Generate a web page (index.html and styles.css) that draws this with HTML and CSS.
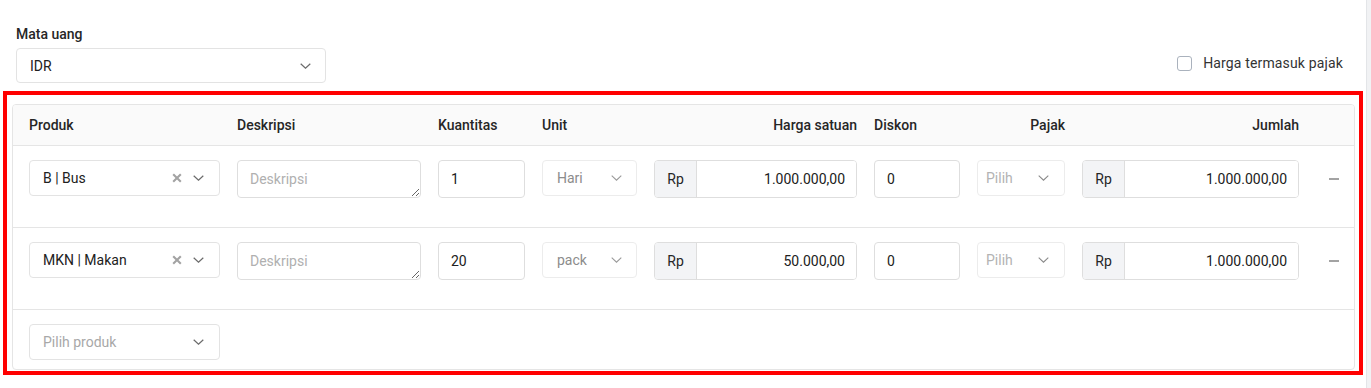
FILE: index.html
```html
<!DOCTYPE html>
<html lang="id">
<head>
<meta charset="utf-8">
<title>Produk</title>
<link rel="stylesheet" href="styles.css">
</head>
<body>
<div class="page">
  <main class="main">
    <div class="top">
      <div class="field">
        <div class="label">Mata uang</div>
        <div class="select currency">
          <span class="sel-text">IDR</span>
          <svg class="chev" width="11" height="6" viewBox="0 0 11 6"><polyline points="0.7,0.7 5.5,5.2 10.3,0.7" fill="none" stroke="#6b6b6b" stroke-width="1.2"/></svg>
        </div>
      </div>
      <label class="check"><span class="box"></span>Harga termasuk pajak</label>
    </div>

    <div class="highlight">
      <div class="table">
        <div class="grid thead">
          <div>Produk</div>
          <div>Deskripsi</div>
          <div>Kuantitas</div>
          <div>Unit</div>
          <div class="right">Harga satuan</div>
          <div>Diskon</div>
          <div class="right">Pajak</div>
          <div class="right">Jumlah</div>
          <div></div>
        </div>

        <div class="grid row">
          <div class="select product">
            <span class="sel-text">B | Bus</span>
            <svg class="clear" width="10" height="10" viewBox="0 0 10 10"><path d="M1.2 1.2L8.8 8.8M8.8 1.2L1.2 8.8" stroke="#a3a3a3" stroke-width="2.1"/></svg>
            <svg class="chev" width="11" height="6" viewBox="0 0 11 6"><polyline points="0.7,0.7 5.5,5.2 10.3,0.7" fill="none" stroke="#6b6b6b" stroke-width="1.2"/></svg>
          </div>
          <textarea class="desc" placeholder="Deskripsi"></textarea>
          <input class="input" type="text" value="1">
          <div class="select dim unit">
            <span class="sel-text">Hari</span>
            <svg class="chev" width="11" height="6" viewBox="0 0 11 6"><polyline points="0.7,0.7 5.5,5.2 10.3,0.7" fill="none" stroke="#9a9a9a" stroke-width="1.1"/></svg>
          </div>
          <div class="group">
            <span class="addon">Rp</span>
            <input class="gin" type="text" value="1.000.000,00">
          </div>
          <input class="input" type="text" value="0">
          <div class="select dim tax">
            <span class="sel-text ph">Pilih</span>
            <svg class="chev" width="11" height="6" viewBox="0 0 11 6"><polyline points="0.7,0.7 5.5,5.2 10.3,0.7" fill="none" stroke="#8a8a8a" stroke-width="1.1"/></svg>
          </div>
          <div class="group">
            <span class="addon">Rp</span>
            <input class="gin" type="text" value="1.000.000,00">
          </div>
          <div class="action"><span class="minus"></span></div>
        </div>

        <div class="grid row">
          <div class="select product">
            <span class="sel-text">MKN | Makan</span>
            <svg class="clear" width="10" height="10" viewBox="0 0 10 10"><path d="M1.2 1.2L8.8 8.8M8.8 1.2L1.2 8.8" stroke="#a3a3a3" stroke-width="2.1"/></svg>
            <svg class="chev" width="11" height="6" viewBox="0 0 11 6"><polyline points="0.7,0.7 5.5,5.2 10.3,0.7" fill="none" stroke="#6b6b6b" stroke-width="1.2"/></svg>
          </div>
          <textarea class="desc" placeholder="Deskripsi"></textarea>
          <input class="input" type="text" value="20">
          <div class="select dim unit">
            <span class="sel-text">pack</span>
            <svg class="chev" width="11" height="6" viewBox="0 0 11 6"><polyline points="0.7,0.7 5.5,5.2 10.3,0.7" fill="none" stroke="#9a9a9a" stroke-width="1.1"/></svg>
          </div>
          <div class="group">
            <span class="addon">Rp</span>
            <input class="gin" type="text" value="50.000,00">
          </div>
          <input class="input" type="text" value="0">
          <div class="select dim tax">
            <span class="sel-text ph">Pilih</span>
            <svg class="chev" width="11" height="6" viewBox="0 0 11 6"><polyline points="0.7,0.7 5.5,5.2 10.3,0.7" fill="none" stroke="#8a8a8a" stroke-width="1.1"/></svg>
          </div>
          <div class="group">
            <span class="addon">Rp</span>
            <input class="gin" type="text" value="1.000.000,00">
          </div>
          <div class="action"><span class="minus"></span></div>
        </div>

        <div class="grid row last">
          <div class="select product">
            <span class="sel-text ph2">Pilih produk</span>
            <svg class="chev" width="11" height="6" viewBox="0 0 11 6"><polyline points="0.7,0.7 5.5,5.2 10.3,0.7" fill="none" stroke="#6b6b6b" stroke-width="1.2"/></svg>
          </div>
        </div>
      </div>
    </div>
  </main>
  <div class="scrollbar"></div>
</div>
</body>
</html>
```

FILE: styles.css
```css
* { box-sizing: border-box; }

html, body {
  margin: 0;
  padding: 0;
  background: #ffffff;
}

body {
  font-family: Roboto, "Liberation Sans", Arial, sans-serif;
  font-size: 14px;
  line-height: 20px;
  color: #212121;
}

.page {
  display: flex;
  height: 388px;
}

.main {
  width: 1366px;
  padding-top: 24px;
}

.scrollbar {
  width: 5px;
  background: #f1f2f4;
  border-left: 1px solid #e3e5e8;
}

/* top section */
.top {
  display: flex;
  justify-content: space-between;
  align-items: flex-end;
  padding: 0 23px 0 16px;
}

.label {
  font-weight: 500;
  color: #262626;
  margin-bottom: 4px;
}

.select {
  display: flex;
  align-items: center;
  height: 36px;
  border: 1px solid #e3e3e3;
  border-radius: 4px;
  background: #fff;
  padding: 0 15px 0 13px;
}

.select .sel-text {
  flex: 1;
  white-space: nowrap;
}

.currency {
  width: 310px;
  height: 35px;
}

.currency .chev { margin-right: -1px; }

.check {
  display: flex;
  align-items: center;
  gap: 11px;
  margin-bottom: 10px;
  color: #333;
  letter-spacing: 0.15px;
}

.box {
  width: 15px;
  height: 15px;
  border: 1px solid #aab2bd;
  border-radius: 3px;
  background: #fff;
}

/* highlight frame */
.highlight {
  margin: 8px 3px 0 3px;
  width: 1360px;
  border: 4px solid #ff0000;
  padding: 9px 4px 1px 5px;
}

.table {
  border: 1px solid #e5e5e5;
  border-radius: 4px;
  overflow: hidden;
}

.grid {
  display: grid;
  grid-template-columns: 191px 184px 87px 95px 203px 86px 88px 217px 1fr;
  column-gap: 17px;
  padding-left: 16px;
  align-items: start;
}

.thead {
  height: 41px;
  background: #fafafa;
  border-bottom: 1px solid #e5e5e5;
  align-items: center;
  font-weight: 500;
  color: #262626;
}

.thead .right { text-align: right; }

.row {
  height: 82px;
  padding-top: 14px;
  border-bottom: 1px solid #e5e5e5;
}

.row.last {
  height: 59px;
  border-bottom: 0;
}

.product .clear { margin-right: 11px; }

.ph { color: #b3b3b3; }
.ph2 { color: #a8a8a8; }

.dim {
  border-color: #ececec;
  color: #8c8c8c;
}

.unit { padding-left: 14px; padding-right: 14px; }
.tax { padding-left: 8px; padding-right: 15px; }

.desc {
  display: block;
  width: 100%;
  height: 38px;
  margin: 0;
  padding: 8px 12px;
  border: 1px solid #dedede;
  border-radius: 4px;
  font: inherit;
  line-height: 20px;
  color: #212121;
  resize: vertical;
  outline: none;
}

.desc::placeholder { color: #b0b0b0; }

.input {
  display: block;
  width: 100%;
  height: 38px;
  margin: 0;
  padding: 0 12px;
  border: 1px solid #dedede;
  border-radius: 4px;
  font: inherit;
  color: #212121;
  background: #fff;
  outline: none;
}

.group {
  display: flex;
  height: 38px;
  border: 1px solid #dedede;
  border-radius: 4px;
  overflow: hidden;
}

.addon {
  width: 42px;
  flex: none;
  display: flex;
  align-items: center;
  justify-content: center;
  background: #f3f4f6;
  border-right: 1px solid #dedede;
  color: #262626;
}

.gin {
  flex: 1;
  min-width: 0;
  border: 0;
  margin: 0;
  padding: 0 11px 0 8px;
  font: inherit;
  color: #212121;
  text-align: right;
  background: #fff;
  outline: none;
}

.action {
  height: 38px;
  display: flex;
  align-items: center;
  justify-content: center;
  padding-right: 3px;
}

.minus {
  width: 10px;
  height: 1.5px;
  background: #a3a3a3;
}
```
